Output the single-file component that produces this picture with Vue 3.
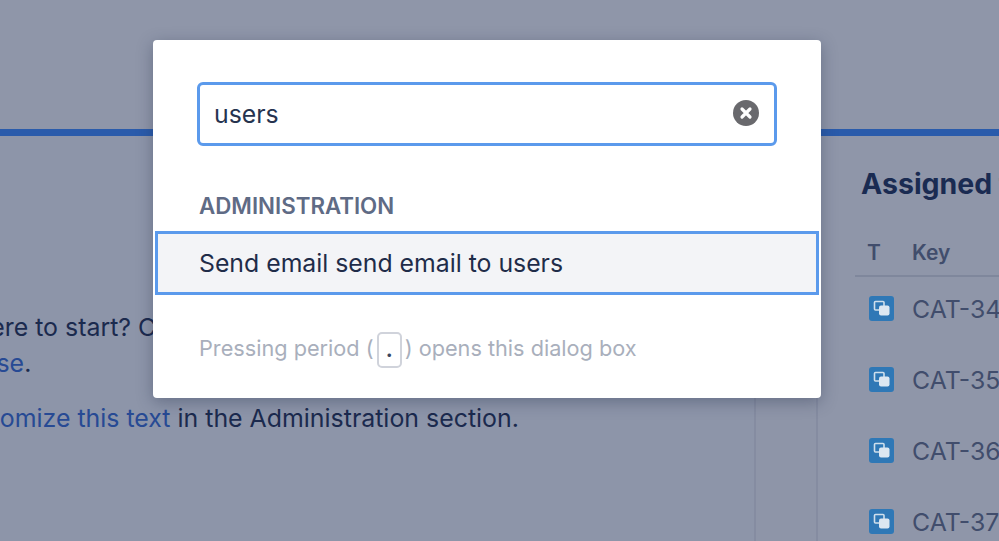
<script setup>
const issues = ['CAT-34', 'CAT-35', 'CAT-36', 'CAT-37']
</script>

<template>
  <div class="page">
    <div class="top"></div>
    <div class="bar"></div>
    <div class="columns">
      <div class="main">
        <div class="intro">
          <p class="line">Not sure where to start? Check out the guide</p>
          <p class="line"><a class="link">Learn a course</a>.</p>
          <p class="line second">You can <a class="link">customize this text</a> in the Administration section.</p>
        </div>
      </div>
      <div class="gutter"></div>
      <div class="side">
        <h2 class="side-title">Assigned to me</h2>
        <div class="table-head">
          <span class="col-t">T</span>
          <span>Key</span>
        </div>
        <div v-for="key in issues" :key="key" class="issue">
          <svg class="issue-icon" viewBox="0 0 25 25" width="25" height="25">
            <rect width="25" height="25" rx="3" fill="#2f78b6" />
            <rect x="5.5" y="5.5" width="9.5" height="8.5" rx="1" fill="none" stroke="#cfdfec" stroke-width="1.6" />
            <rect x="10" y="9.5" width="10.5" height="10" rx="2" fill="#dce7f1" />
          </svg>
          <a class="issue-key">{{ key }}</a>
        </div>
      </div>
    </div>

    <div class="dialog">
      <div class="search">
        <span class="search-text">users</span>
        <svg class="clear" viewBox="0 0 26 26" width="26" height="26">
          <circle cx="13" cy="13" r="13" fill="#69696d" />
          <path d="M9 9 17 17M17 9 9 17" stroke="#fff" stroke-width="3.2" stroke-linecap="round" />
        </svg>
      </div>
      <div class="group-title">ADMINISTRATION</div>
      <div class="result">Send email send email to users</div>
      <div class="hint">Pressing period (<kbd class="key">.</kbd>) opens this dialog box</div>
    </div>
  </div>
</template>

<style scoped>
.page {
  position: relative;
  width: 999px;
  height: 541px;
  overflow: hidden;
  background: #8f96a9;
  font-family: Inter, "Liberation Sans", sans-serif;
  color: #1b2a4e;
}
.top {
  height: 129px;
}
.bar {
  height: 7px;
  background: #2a5bab;
}
.columns {
  display: flex;
  height: 405px;
}
.main {
  width: 754px;
  flex-shrink: 0;
  border-right: 2px solid #858ca1;
  background: #8d95a9;
  overflow: hidden;
}
.intro {
  margin: 173px 0 0 -152px;
  font-size: 24.9px;
  line-height: 36px;
  white-space: nowrap;
}
.line {
  margin: 0;
}
.second {
  margin-top: 19px;
}
.link {
  color: #274a94;
}
.gutter {
  width: 60px;
  flex-shrink: 0;
  border-right: 2px solid #858ca1;
  background: #8e95a8;
}
.side {
  flex: 1;
  padding-left: 37px;
  white-space: nowrap;
  overflow: hidden;
}
.side-title {
  margin: 30px 0 0 6px;
  font-size: 28.5px;
  line-height: 36px;
  font-weight: 700;
  color: #1a2b52;
}
.table-head {
  display: flex;
  align-items: center;
  height: 53px;
  margin: 22px 0 -4px;
  padding: 6px 0 0 12px;
  box-sizing: border-box;
  border-bottom: 2px solid #7f879c;
  font-size: 21px;
  font-weight: 600;
  color: #414d6c;
}
.col-t {
  width: 45px;
}
.issue {
  display: flex;
  align-items: center;
  gap: 18px;
  height: 71px;
  padding-left: 14px;
  font-size: 24.8px;
  color: #414d6c;
}
.issue-icon {
  flex-shrink: 0;
}
.dialog {
  position: absolute;
  left: 153px;
  top: 40px;
  width: 668px;
  height: 358px;
  box-sizing: border-box;
  padding: 42px 2px 0;
  background: #fff;
  border-radius: 4px;
  box-shadow: 0 4px 16px rgba(30, 40, 70, 0.35);
}
.search {
  display: flex;
  align-items: center;
  justify-content: space-between;
  height: 64px;
  box-sizing: border-box;
  margin: 0 42px;
  padding: 0 15px 0 14px;
  border: 3px solid #5b9aec;
  border-radius: 6px;
}
.search-text {
  font-size: 24.8px;
  color: #26334f;
}
.clear {
  margin-top: -2px;
}
.group-title {
  margin: 46px 0 0 44px;
  font-size: 22.3px;
  line-height: 28px;
  font-weight: 600;
  color: #5f6b85;
}
.result {
  display: flex;
  align-items: center;
  height: 64px;
  box-sizing: border-box;
  margin-top: 11px;
  padding-left: 41px;
  background: #f3f4f7;
  border: 3px solid #5b9aec;
  font-size: 24.8px;
  color: #1f2c49;
}
.hint {
  display: flex;
  align-items: center;
  margin: 35px 0 0 44px;
  height: 36px;
  font-size: 21.7px;
  color: #a9afbc;
}
.key {
  display: flex;
  align-items: flex-end;
  justify-content: center;
  width: 25px;
  height: 36px;
  box-sizing: border-box;
  margin: 4px 3px 0 3px;
  padding-bottom: 6px;
  border: 2px solid #d0d3db;
  border-radius: 5px;
  font-family: inherit;
  font-size: 21px;
  font-weight: 700;
  line-height: 1;
  color: #3a4560;
}
</style>
